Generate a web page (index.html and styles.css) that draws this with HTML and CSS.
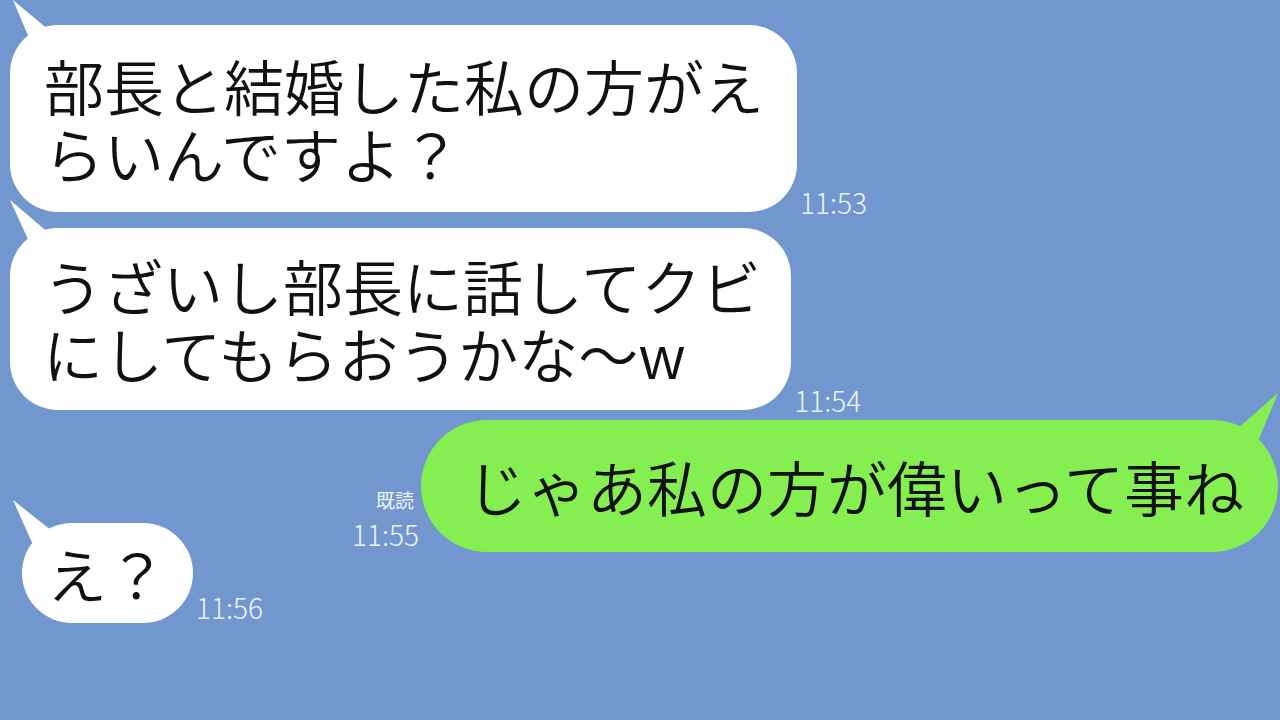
FILE: index.html
```html
<!DOCTYPE html>
<html lang="ja">
<head>
  <meta charset="UTF-8">
  <meta name="viewport" content="width=device-width, initial-scale=1.0">
  <title>トーク</title>
  <link rel="stylesheet" href="styles.css">
</head>
<body>
  <div class="chat">
    <div class="msg">
      <div class="bubble first">部長と結婚した私の方がえ<br>らいんですよ？</div>
      <span class="time">11:53</span>
    </div>
    <div class="msg">
      <div class="bubble second">うざいし部長に話してクビ<br>にしてもらおうかな～w</div>
      <span class="time">11:54</span>
    </div>
    <div class="msg mine">
      <div class="meta">
        <span class="read">既読</span>
        <span class="time">11:55</span>
      </div>
      <div class="bubble green">じゃあ私の方が偉いって事ね</div>
    </div>
    <div class="msg short">
      <div class="bubble small">え？</div>
      <span class="time">11:56</span>
    </div>
  </div>
</body>
</html>
```
FILE: styles.css
```css
body {
  margin: 0;
  background: #7297cf;
  font-family: "Noto Sans CJK JP", "Noto Sans", sans-serif;
  color: #111;
}

.chat {
  width: 1280px;
  height: 720px;
  box-sizing: border-box;
  padding: 25px 2px 0 10px;
  display: flex;
  flex-direction: column;
  gap: 16px;
  overflow: hidden;
}

.msg {
  display: flex;
  align-items: flex-end;
  gap: 3px;
}

.bubble {
  position: relative;
  background: #fff;
  font-size: 60px;
  font-weight: 350;
  line-height: 68px;
  white-space: nowrap;
  border-radius: 48px;
}

/* speech tail, top left */
.bubble::before {
  content: "";
  position: absolute;
  left: 0;
  top: -25px;
  width: 45px;
  height: 50px;
  background: inherit;
  clip-path: polygon(3px 0, 40px 31px, 22px 45px);
}

.first {
  padding: 26px 33px 25px 34px;
}

.second {
  padding: 23px 30px 23px 33px;
}

.second::before {
  top: -28px;
  left: -3px;
  height: 53px;
  clip-path: polygon(3px 0, 43px 34px, 25px 48px);
}

.time {
  color: #eef4ff;
  font-size: 28px;
  font-weight: 300;
  line-height: 28px;
  margin-bottom: -4px;
}

.msg.mine {
  justify-content: flex-end;
  margin-top: -6px;
  gap: 2px;
}

.meta {
  display: flex;
  flex-direction: column;
  align-items: flex-end;
  gap: 11px;
  margin-bottom: 4px;
}

.read {
  font-size: 19px;
  line-height: 19px;
  color: #eef4ff;
  margin-right: 5px;
}

.meta .time {
  margin-bottom: 0;
}

.green {
  background: #85ee50;
  padding: 32px 34px 32px 46px;
  border-radius: 66px;
}

.green::before {
  content: none;
}

/* speech tail, top right */
.green::after {
  content: "";
  position: absolute;
  right: 0;
  top: -27px;
  width: 45px;
  height: 55px;
  background: inherit;
  clip-path: polygon(45px 0, 3px 37px, 23px 53px);
}

.msg.short {
  margin-top: -45px;
  margin-left: 12px;
}

.small {
  padding: 16px 26px 16px 25px;
  border-radius: 50px;
}

.small::before {
  left: -10px;
  top: -23px;
  clip-path: polygon(1px 0, 40px 31px, 22px 47px);
}

.short .time {
  margin-bottom: 2px;
}
```
